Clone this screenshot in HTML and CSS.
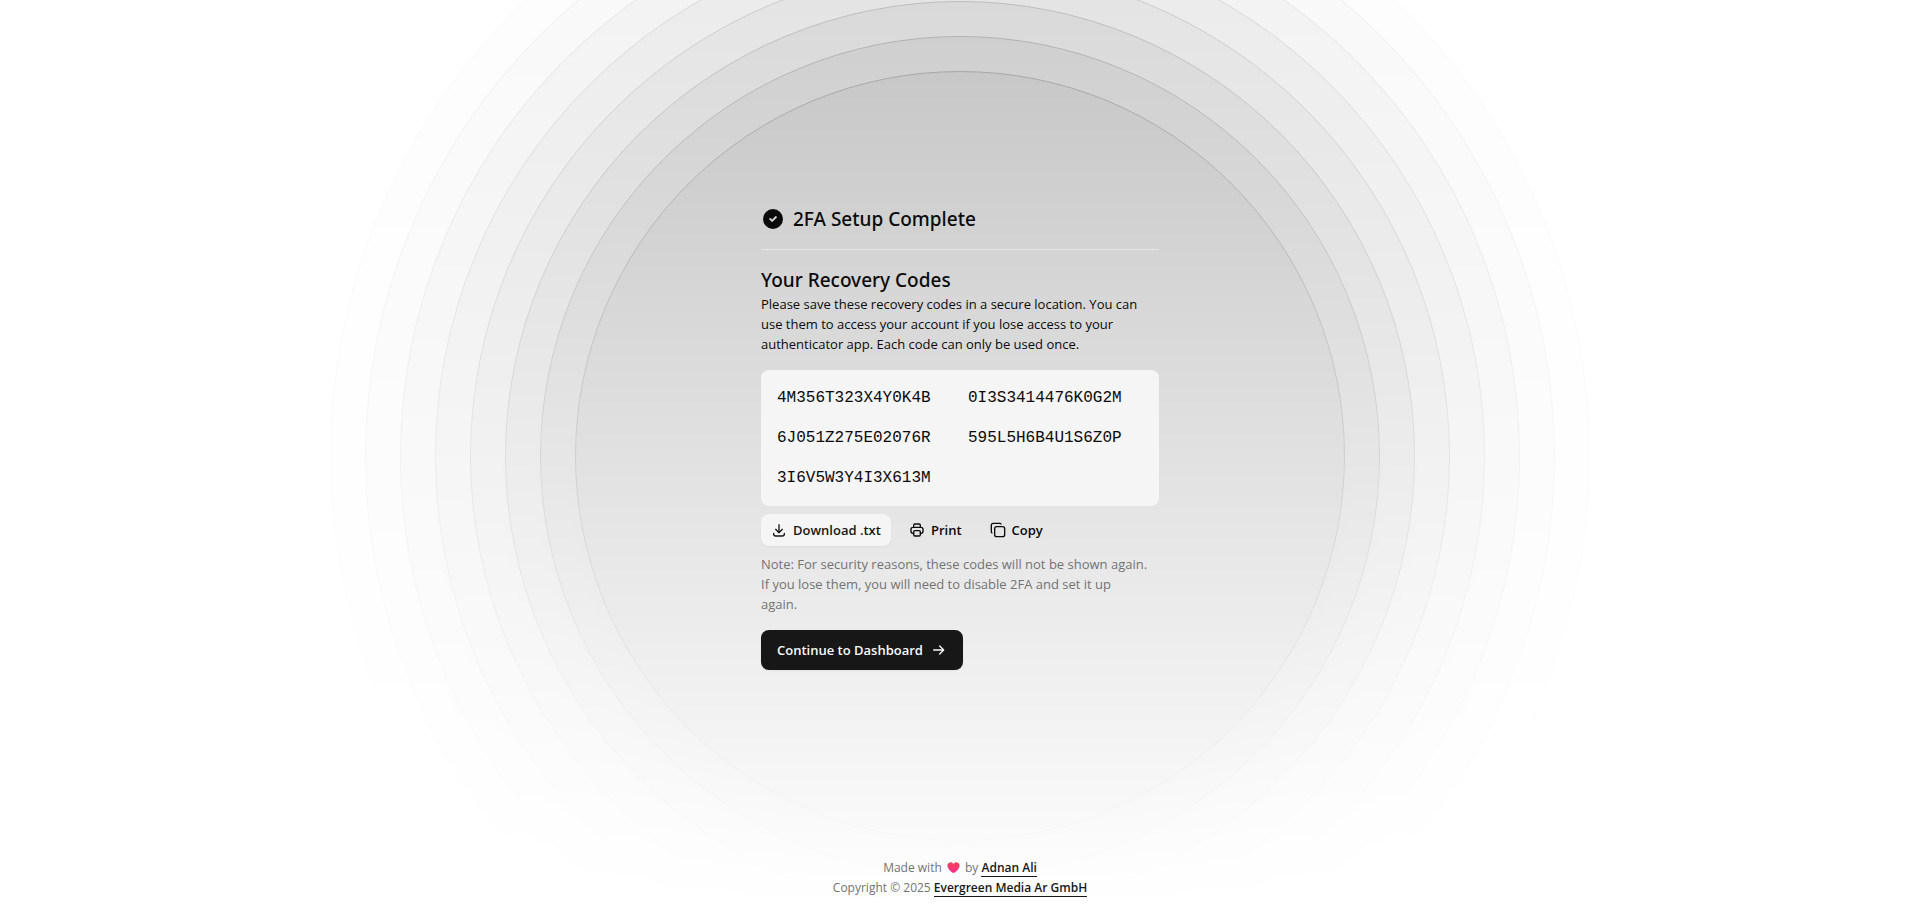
FILE: index.html
```html
<!DOCTYPE html>
<html lang="en">
<head>
<meta charset="utf-8">
<meta name="viewport" content="width=device-width, initial-scale=1">
<title>2FA Setup Complete</title>
<link rel="stylesheet" href="styles.css">
</head>
<body class="page">
<div class="ripple" aria-hidden="true">
  <div class="ripple-circle" style="--i:0"></div>
  <div class="ripple-circle" style="--i:1"></div>
  <div class="ripple-circle" style="--i:2"></div>
  <div class="ripple-circle" style="--i:3"></div>
  <div class="ripple-circle" style="--i:4"></div>
  <div class="ripple-circle" style="--i:5"></div>
  <div class="ripple-circle" style="--i:6"></div>
  <div class="ripple-circle" style="--i:7"></div>
</div>
<main class="main">
  <div class="panel">
    <header class="panel-header">
      <svg class="badge" viewBox="0 0 24 24" aria-hidden="true"><path fill="currentColor" fill-rule="evenodd" d="M12 2a10 10 0 1 0 0 20a10 10 0 0 0 0-20zM15.700 10.700l-3.900 3.900a1 1 0 0 1-1.400 0l-2-2a1 1 0 0 1 1.400-1.400l1.300 1.300l3.200-3.200a1 1 0 0 1 1.400 1.400z"/></svg>
      <h1 class="title">2FA Setup Complete</h1>
    </header>
    <section class="intro">
      <h2 class="title">Your Recovery Codes</h2>
      <p class="text">Please save these recovery codes in a secure location. You can use them to access your account if you lose access to your authenticator app. Each code can only be used once.</p>
    </section>
    <ul class="codes">
      <li>4M356T323X4Y0K4B</li>
      <li>0I3S3414476K0G2M</li>
      <li>6J051Z275E02076R</li>
      <li>595L5H6B4U1S6Z0P</li>
      <li>3I6V5W3Y4I3X613M</li>
    </ul>
    <div class="actions">
      <button type="button" class="button button-secondary">
        <svg class="icon" viewBox="0 0 24 24" aria-hidden="true"><path d="M4 17v1a3 3 0 0 0 3 3h10a3 3 0 0 0 3-3v-1M7 11l5 5 5-5M12 16V4"/></svg>
        Download .txt
      </button>
      <button type="button" class="button">
        <svg class="icon" viewBox="0 0 24 24" aria-hidden="true"><path d="M7 17H6a3 3 0 0 1-3-3v-3a3 3 0 0 1 3-3h12a3 3 0 0 1 3 3v3a3 3 0 0 1-3 3h-1M7 8V5a2 2 0 0 1 2-2h6a2 2 0 0 1 2 2v3"/><rect x="7" y="13" width="10" height="8" rx="2"/></svg>
        Print
      </button>
      <button type="button" class="button">
        <svg class="icon" viewBox="0 0 24 24" aria-hidden="true"><rect x="7" y="7" width="15" height="15" rx="3"/><path d="M3 16.500A2 2 0 0 1 2 14.700V5a3 3 0 0 1 3-3h9.700a2 2 0 0 1 1.800 1"/></svg>
        Copy
      </button>
    </div>
    <p class="text text-muted">Note: For security reasons, these codes will not be shown again. If you lose them, you will need to disable 2FA and set it up<br>again.</p>
    <button type="button" class="button button-primary">
      Continue to Dashboard
      <svg class="icon" viewBox="0 0 24 24" aria-hidden="true"><path d="M4 12h15M13 6l6 6-6 6"/></svg>
    </button>
  </div>
</main>
<footer class="footer">
  <p>Made with <svg class="heart" viewBox="0 0 26 22" role="img" aria-label="love"><defs><linearGradient id="heart-fill" x1="0" y1="0" x2="0" y2="1"><stop offset="0" stop-color="#ee4358"/><stop offset="1" stop-color="#ff2a8a"/></linearGradient></defs><path fill="url(#heart-fill)" d="M13 4C11 1 8 0 6 1C2 2 0 5 1 9C2 14 7 19 11 21C12 22 14 22 15 21C19 19 24 14 25 9C26 5 24 2 20 1C18 0 15 1 13 4Z"/></svg> by <a href="#author">Adnan Ali</a></p>
  <p>Copyright © 2025 <a href="#company">Evergreen Media Ar GmbH</a></p>
</footer>
</body>
</html>
```
FILE: styles.css
```css
* { box-sizing: border-box; margin: 0; padding: 0; }

.page {
  --foreground: #0a0a0a;
  position: relative;
  display: flex;
  flex-direction: column;
  min-height: 100vh;
  overflow-x: hidden;
  background: #fff;
  color: var(--foreground);
  font-family: "Segoe UI", "Open Sans", "Noto Sans", sans-serif;
  font-size: 13px;
  line-height: 20px;
}

.ripple {
  position: absolute;
  inset: 0;
  overflow: hidden;
  pointer-events: none;
  mask-image: linear-gradient(to bottom, white, transparent);
}

.ripple-circle {
  position: absolute;
  top: 50%;
  left: 50%;
  width: calc(770px + var(--i) * 70px);
  aspect-ratio: 1;
  transform: translate(-50%, -50%);
  border: 1px solid var(--foreground);
  border-radius: 50%;
  background: rgb(10 10 10 / 26%);
  box-shadow: 0 20px 25px -5px rgb(0 0 0 / 10%), 0 8px 10px -6px rgb(0 0 0 / 10%);
  opacity: calc(0.24 - var(--i) * 0.03);
}

.main {
  position: relative;
  flex: 1;
  display: flex;
  align-items: center;
  justify-content: center;
  padding: 16px 16px 0;
}

.panel {
  display: flex;
  flex-direction: column;
  align-items: stretch;
  width: 100%;
  max-width: 398px;
}

.panel-header {
  display: flex;
  align-items: center;
  gap: 8px;
  padding-bottom: 16px;
  margin-bottom: 16px;
  border-bottom: 1px solid #e5e5e5;
}

.badge { width: 24px; height: 24px; }

.title {
  font-family: "Segoe UI", "Noto Sans", "Open Sans", sans-serif;
  font-size: 19px;
  font-weight: 500;
  line-height: 28px;
}

.codes {
  display: grid;
  grid-template-columns: 1fr 1fr;
  gap: 16px;
  margin: 16px 0 8px;
  padding: 16px;
  border-radius: 8px;
  background: #f5f5f5;
  list-style: none;
  font-family: "Liberation Mono", monospace;
  font-size: 16px;
  line-height: 24px;
}

.actions {
  display: flex;
  gap: 8px;
  margin-bottom: 8px;
}

.button {
  display: inline-flex;
  align-items: center;
  justify-content: center;
  gap: 6px;
  height: 32px;
  padding: 0 10px;
  border: 0;
  border-radius: 8px;
  background: transparent;
  color: var(--foreground);
  font: inherit;
  font-weight: 600;
  white-space: nowrap;
  cursor: pointer;
}

.button-secondary {
  background: #f5f5f5;
  color: #171717;
  box-shadow: 0 1px 2px rgb(0 0 0 / 5%);
}

.button-primary {
  align-self: flex-start;
  gap: 8px;
  height: 40px;
  margin-top: 16px;
  padding: 0 16px;
  background: #171717;
  color: #fafafa;
  box-shadow: 0 1px 2px rgb(0 0 0 / 5%);
}

.icon {
  width: 16px;
  height: 16px;
  fill: none;
  stroke: currentColor;
  stroke-width: 2;
  stroke-linecap: round;
  stroke-linejoin: round;
}

.text-muted {
  padding-right: 4px;
  color: #737373;
}

.footer {
  position: relative;
  padding: 0 16px 13px;
  color: #737373;
  font-size: 12px;
  text-align: center;
}

.footer a {
  border-bottom: 1px solid currentColor;
  color: #171717;
  font-weight: 600;
  text-decoration: none;
}

.heart {
  width: 13px;
  height: 11px;
  margin: 0 2px;
  vertical-align: -1px;
}
```
